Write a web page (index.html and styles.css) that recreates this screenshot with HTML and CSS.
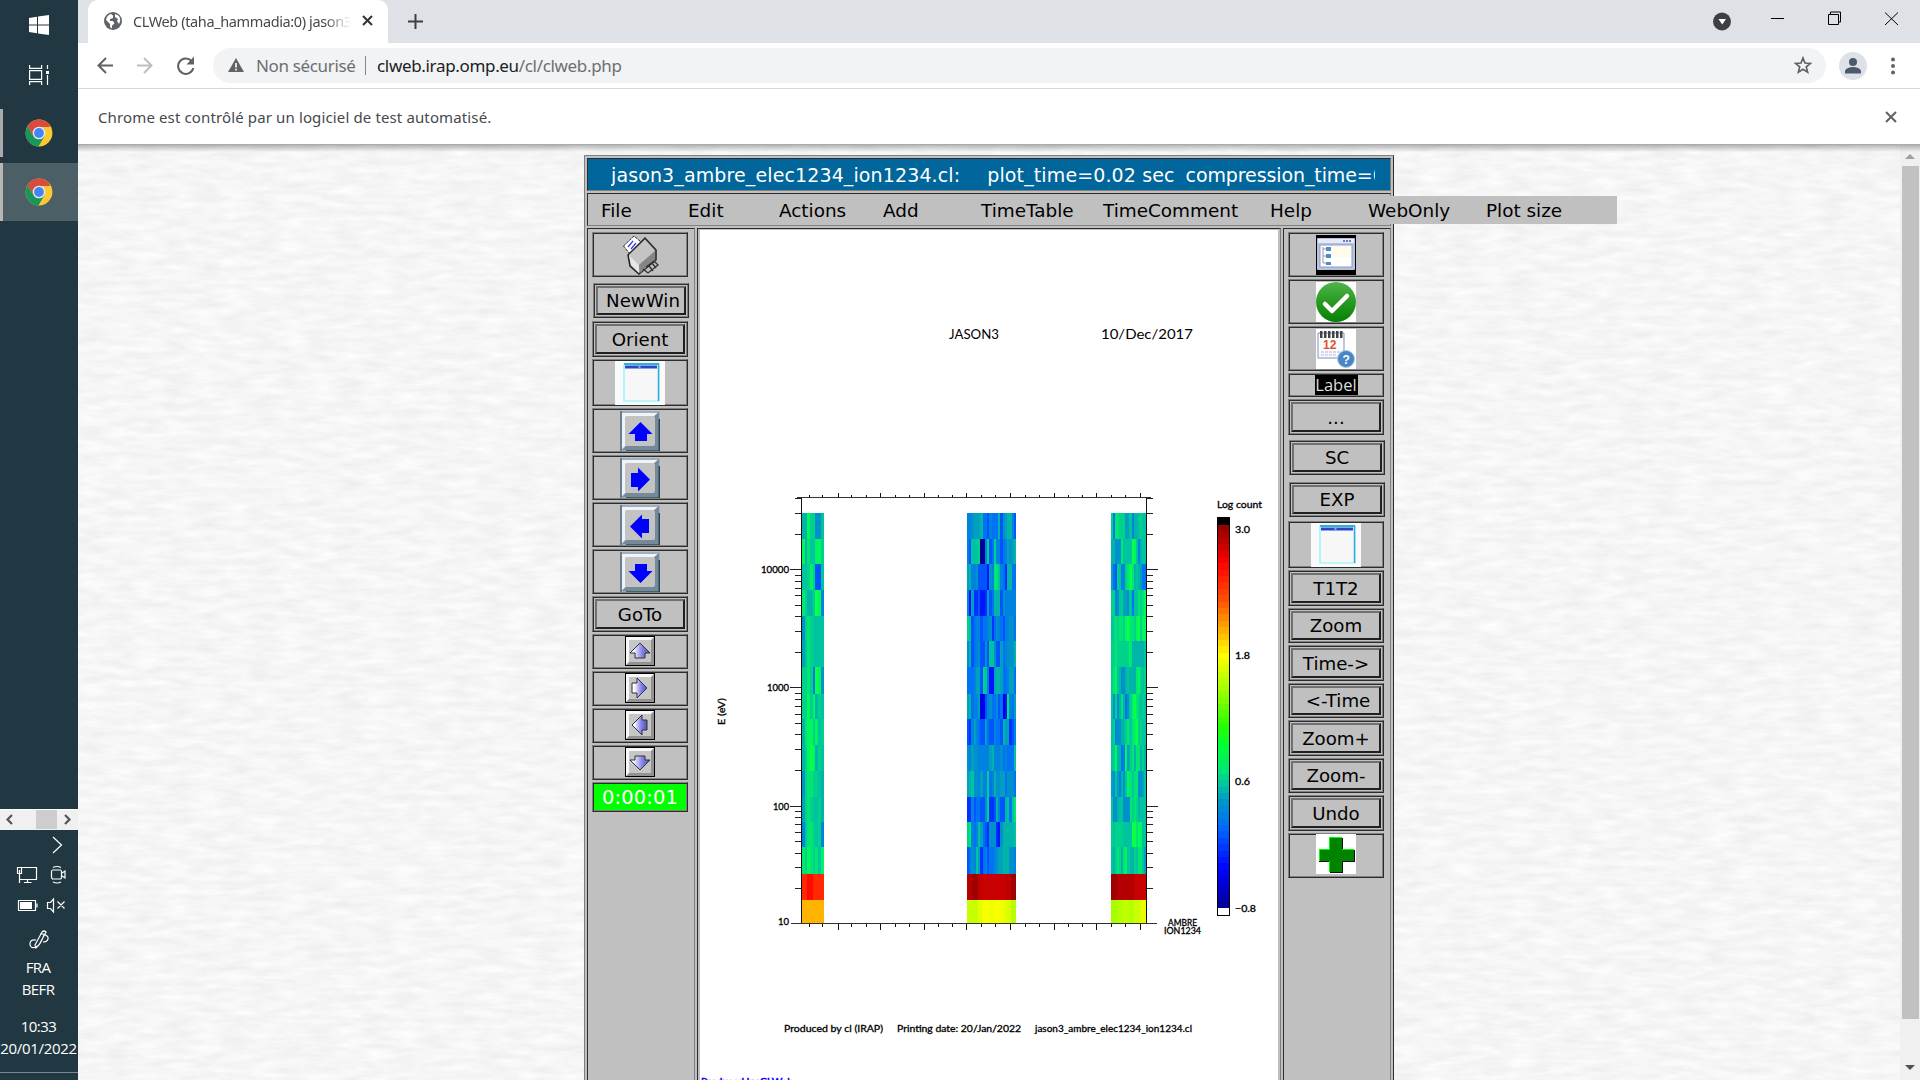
FILE: index.html
```html
<!DOCTYPE html>
<html lang="fr">
<head>
<meta charset="utf-8">
<title>CLWeb</title>
<link rel="stylesheet" href="styles.css">
</head>
<body>
<svg class="defs" width="0" height="0">
  <defs>
    <symbol id="chrome" viewBox="0 0 48 48">
      <circle cx="24" cy="24" r="23" fill="#fcc934"/>
      <path d="M24 1A23 23 0 0 0 4 12.6L14.5 30 24 13.500H43.500A23 23 0 0 0 24 1z" fill="#d94b3f"/>
      <path d="M4.200 12.300A23 23 0 0 0 23 47L33.500 29.500 24 34.500 14.200 29.200z" fill="#17975a"/>
      <circle cx="24" cy="24" r="10.800" fill="#e8eaed"/><circle cx="24" cy="24" r="8.400" fill="#4285f4"/>
    </symbol>
    <symbol id="window" viewBox="0 0 50 44">
      <path fill="#fafafa" d="M0 0h50v44H0z"/>
      <path d="M9 3h35v37H9z" fill="#f7f7f7" stroke="#82f5f7" stroke-width="1.200"/>
      <path d="M9 3h35" stroke="#28b4d8" stroke-width="2"/><path d="M43.500 3v37" stroke="#38a9d6" stroke-width="1.500"/>
      <path d="M10 6h32" stroke="#2848c8" stroke-width="3"/><path d="M23.500 6h2" stroke="#fff"/>
    </symbol>
    <symbol id="bevel" viewBox="0 0 40 40">
      <path fill="#a2b0bd" d="M0 0h40v40H0z"/><path d="M1 0v40" stroke="#54717c" stroke-width="1.500"/>
      <path d="M2 2h36l-5 5H7v26l-5 5z" fill="#f2f2fb"/><path d="M39 1v38H2l5-5h26V6z" fill="#75899a"/>
      <path d="M39.300 8v32H6" fill="none" stroke="#24484c" stroke-width="1.500"/><rect x="5" y="5" width="30" height="30" rx="2" fill="#c3c3c3"/>
    </symbol>
    <symbol id="smallbevel" viewBox="0 0 30 30">
      <path fill="#000" d="M0 0h30v30H0z"/><path fill="#f8f8f8" d="M1 1h28v28H1z"/><path fill="#929292" d="M29 1v28H1l3-3h22V4z"/><path fill="#c6c6c6" d="M4 4h22v22H4z"/>
    </symbol>
    <linearGradient id="lav"><stop offset=".15" stop-color="#fff"/><stop offset=".6" stop-color="#8585e8"/><stop offset="1" stop-color="#5050ae"/></linearGradient>
    <linearGradient id="green" x2="0" y2="1"><stop stop-color="#50b54c"/><stop offset=".5" stop-color="#279a21"/><stop offset="1" stop-color="#078006"/></linearGradient>
    <filter id="paper" x="0" y="0" width="100%" height="100%" color-interpolation-filters="sRGB">
      <feTurbulence type="fractalNoise" baseFrequency=".035 .14" numOctaves="4" seed="8"/>
      <feColorMatrix values=".08 0 0 0 .923 .08 0 0 0 .923 .08 0 0 0 .923 0 0 0 0 1"/>
    </filter>
  </defs>
</svg>

<div class="screen">
  <aside class="taskbar">
    <div class="task start"><svg width="20" height="20" viewBox="0 0 20 20" fill="#fff"><path d="M0 3l8-1.200v7.700H0zM9 1.600L20 0v9.500H9zM0 10.500h8v7.700L0 17zM9 10.500h11V20L9 18.400z"/></svg></div>
    <div class="task view"><svg width="20" height="20" viewBox="0 0 20 20" fill="none" stroke="#fff" stroke-width="1.200"><path d="M.6 0v3.400h12V0M.6 20v-3.400h12V20M.6 5.600h12v8.800H.6zM18.500 0v4M18.500 10v10"/><path d="M17 6h3v3h-3z" fill="#fff" stroke="none"/></svg></div>
    <div class="task app"><svg width="28" height="28"><use href="#chrome"/></svg></div>
    <div class="task app current"><svg width="28" height="28"><use href="#chrome"/></svg></div>
    <div class="sidescroll"><svg width="78" height="20" fill="none" stroke="#555" stroke-width="2.200"><path stroke="none" fill="#cdcdcd" d="M36 0h21v19H36z"/><path d="M12 5L7.500 9.500 12 14M65 5L69.500 9.500 65 14"/></svg></div>
    <svg class="tray" width="78" height="130" fill="none" stroke="#fff" stroke-width="1.200">
      <path d="M53 7l8.500 8-8.500 8"/>
      <path d="M22 37.500h14.500v12H19.500v-5M27.500 49.500V52M24 52.500h7.500M17.500 37.500h4v6h-4zM19.500 40v13"/>
      <path d="M52.500 40h8q1 0 1 2v5q0 2-1 2h-8q-1-1-1-2v-5q0-2 1-2zM62 43l3-2v7l-3-2M53 37.500q4-2 8 0M53 52q4 2 8 0"/>
      <path d="M18.500 70.500h17v10h-17zM37 73.500v4"/><path d="M20 72h12v7H20z" fill="#fff" stroke="none"/>
      <path d="M47.500 72.500h3l3-3.500v13l-3-3.500h-3zM57.500 71.500l7 7M64.500 71.500l-7 7"/>
      <path d="M36 118l-1-3 7-13q2-2 4 0l-7 13zM43 104q6 2 5 5t-5 3M36 110q-6-1-6 4t6 3q4-1 8-12M40 104h4"/>
    </svg>
    <div class="lang">FRA<br>BEFR</div>
    <div class="clock">10:33<br><span>20/01/2022</span></div>
    <div class="desk"></div>
  </aside>

  <main class="browser">
    <header class="tabs">
      <div class="tab">
        <svg width="18" height="18" viewBox="0 0 18 18"><circle cx="9" cy="9" r="9" fill="#5f6368"/><path d="M2 8l4 4v3l2 1.500v-3l2.500-2L9 9H6V7l3-1V3.500L7 2Q3 3 2 8zM11 2v3l3 2-1 2 2 3q2-3 1-6t-5-4z" fill="#fff"/></svg>
        <span>CLWeb (taha_hammadia:0) jason3</span>
        <svg width="11" height="11" stroke="#333" stroke-width="2"><path d="M1 1l9 9M10 1l-9 9"/></svg>
      </div>
      <svg class="plus" width="15" height="15" stroke="#3c4043" stroke-width="2"><path d="M7.500 0v15M0 7.500h15"/></svg>
      <svg class="wincontrols" width="190" height="32" viewBox="0 0 190 32" fill="none" stroke="#000"><circle cx="12" cy="21.500" r="9" fill="#3c4043" stroke="none"/><path d="M8.500 19h7.500L12.200 24.500z" fill="#fff" stroke="none"/><path d="M61 18.500h13M118.500 14.500h10v10h-10zM120.500 14v-2h10v10H129M175 12.500l13 12.500M188 12.500L175 25"/></svg>
    </header>
    <div class="toolbar">
      <svg width="105" height="20" viewBox="0 0 105 20" fill="none" stroke="#5f6368" stroke-width="2"><path d="M17 9.500H3M10 2L2.500 9.500 10 17"/><path d="M41 9.500h14M48 2l7.500 7.500L48 17" stroke="#bcbec0"/><path d="M95.500 5a7.700 7.700 0 1 0 1.800 7"/><path d="M98 .5v8H90.500z" fill="#5f6368" stroke="none"/></svg>
      <div class="omnibox">
        <svg width="16" height="14" viewBox="0 0 16 14"><path d="M8 0l8 14H0z" fill="#5f6368"/><path d="M7.200 5h1.600v4.500H7.200zM7.200 10.800h1.600v1.600H7.200z" fill="#fff"/></svg>
        <span class="unsafe">Non sécurisé</span><i></i><span class="url"><b>clweb.irap.omp.eu</b>/cl/clweb.php</span>
        <svg class="star" width="18" height="18" viewBox="0 0 18 18" fill="none" stroke="#5f6368" stroke-width="1.700"><path d="M9 2l2 5 5.500.4-4.200 3.500 1.300 5.200L9 13.200l-4.600 2.900 1.300-5.200L1.500 7.400 7 7z"/></svg>
      </div>
      <svg width="60" height="28" viewBox="0 0 60 28"><circle cx="14" cy="14" r="14" fill="#dee1e6"/><g fill="#4c5a6c"><circle cx="14" cy="10" r="4"/><path d="M6 21.500v-3q2-3.500 8-3.500t8 3.500v3z"/></g><g fill="#5f6368"><circle cx="54" cy="7.500" r="2"/><circle cx="54" cy="14" r="2"/><circle cx="54" cy="20.500" r="2"/></g></svg>
    </div>
    <div class="infobar"><span>Chrome est contrôlé par un logiciel de test automatisé.</span><svg width="12" height="12" stroke="#5f6368" stroke-width="2"><path d="M1 1l10 10M11 1L1 11"/></svg></div>

    <div class="page">
      <svg class="paper" width="1822" height="935"><rect width="1822" height="935" filter="url(#paper)"/></svg>
      <section class="app">
        <div class="cell title"><div>jason3_ambre_elec1234_ion1234.cl:<span class="t2">plot_time=0.02 sec</span><span class="t3">compression_time=0</span></div></div>
        <div class="cell menu"><nav><span>File</span><span>Edit</span><span>Actions</span><span>Add</span><span>TimeTable</span><span>TimeComment</span><span>Help</span><span>WebOnly</span><span>Plot size</span></nav></div>
        <div class="body">
          <div class="cell tools left">
            <div class="b h45"><svg width="38" height="40" viewBox="0 0 38 40"><path d="M2.500 11L13 1l7 6-11 12z" fill="#fff" stroke="#222" stroke-dasharray="3 1"/><path d="M7 12l5-6M10 14l5-6" stroke="#3c3cdc" stroke-width="1.300"/><path d="M7 20L24 3l11 12v10L18 39l-9-8z" fill="#aaa" stroke="#222" stroke-width="1.500"/><path d="M8 20L24 5l10 11-16 14z" fill="#c4c4c4"/><path d="M8 20l10 10v8l-8-8z" fill="#e6e6e6"/><path d="M18 30l16-14v9L19 38z" fill="#858585"/><path d="M25 32l8-6 4 4-10 8-5-4M28 31l4 5M31 28l4 5" fill="none" stroke="#333" stroke-width="1.300"/></svg></div>
            <div class="b btn h35 shift mt6"><span class="nudge">NewWin</span></div>
            <div class="b btn h36 mt3"><span>Orient</span></div>
            <div class="b h47"><svg width="50" height="44"><use href="#window"/></svg></div>
            <div class="b h45"><svg width="40" height="40"><use href="#bevel"/><path fill="#00f" d="M20.500 11l12 12H27v7H15v-7H8.500z"/></svg></div>
            <div class="b h45"><svg width="40" height="40"><use href="#bevel"/><path fill="#00f" d="M30 21.500L18 33.500V29h-7V15h7V9.500z"/></svg></div>
            <div class="b h45"><svg width="40" height="40"><use href="#bevel"/><path fill="#00f" d="M10 21.500L22 33.500V28h7V14h-7V9.500z"/></svg></div>
            <div class="b h45"><svg width="40" height="40"><use href="#bevel"/><path fill="#00f" d="M20.500 31l12-12H27v-7H15v7H8.500z"/></svg></div>
            <div class="b btn h36"><span>GoTo</span></div>
            <div class="b h35 up1"><svg width="30" height="30"><use href="#smallbevel"/><path d="M15 7l10 10h-5v5H10v-5H5z" fill="url(#lav)" stroke="#333"/></svg></div>
            <div class="b h35 up1"><svg width="30" height="30"><use href="#smallbevel"/><path d="M22 15L12 25v-5H7V10h5V5z" fill="url(#lav)" stroke="#333"/></svg></div>
            <div class="b h35 up1"><svg width="30" height="30"><use href="#smallbevel"/><path d="M7 15l10 10v-5h5V10h-5V5z" fill="url(#lav)" stroke="#333"/></svg></div>
            <div class="b h35 up1"><svg width="30" height="30"><use href="#smallbevel"/><path d="M15 23L5 13h5V9h10v4h5z" fill="url(#lav)" stroke="#333"/></svg></div>
            <div class="b timer">0:00:01</div>
          </div>
          <div class="cell canvas"><svg id="plot" width="578" height="850" viewBox="700 230 578 850"></svg></div>
          <div class="cell tools right">
            <div class="b h45"><svg width="40" height="40" viewBox="0 0 40 40"><path d="M0 0h40v40H0z"/><rect x="1" y="3" width="38" height="32" rx="1" fill="#b9c1dc"/><path fill="#e3ebfb" d="M2 4h36v4H2z"/><path d="M27 6h8" stroke="#6879bd" stroke-width="2" stroke-dasharray="2 1"/><path fill="#fff" stroke="#8d9bcc" d="M4 10h32v22H4z"/><path fill="#fffbea" d="M16 11h19v11H16z"/><path d="M7 12v16h4M7 14h4M7 21h4" fill="none" stroke="#999"/><path fill="#4e8cce" d="M10 12h5v4h-5zM10 19h5v4h-5zM10 27h5v3h-5z"/></svg></div>
            <div class="b h45"><svg width="40" height="40"><path fill="#fff" d="M0 0h40v40H0z"/><circle cx="20" cy="20" r="20" fill="url(#green)"/><path d="M9 22l7 7 15-15" fill="none" stroke="#fff" stroke-width="4.500" stroke-linecap="round" stroke-linejoin="round"/></svg></div>
            <div class="b h45"><svg width="40" height="40"><path fill="#fff" d="M0 0h40v40H0z"/><path d="M2 4h26v25H2z" fill="#fafbff" stroke="#8290b5"/><path d="M4 5.500h23" stroke="#444" stroke-width="7" stroke-dasharray="2.500 1.500"/><text x="7" y="20" class="cal">12</text><path d="M5 23h20M5 26h15" stroke="#a9bad6" stroke-dasharray="3 1"/><circle cx="30" cy="30" r="8.500" fill="#4a86c5" stroke="#a9cbea"/><text x="26.500" y="34.500" class="q">?</text></svg></div>
            <div class="b h24"><span class="label">Label</span></div>
            <div class="b btn h36"><span>...</span></div>
            <div class="b btn h35 shift mt5"><span>SC</span></div>
            <div class="b btn h35 shift mt7"><span>EXP</span></div>
            <div class="b h47 mt4"><svg width="50" height="44"><use href="#window"/></svg></div>
            <div class="b btn h36"><span>T1T2</span></div>
            <div class="b btn h35"><span>Zoom</span></div>
            <div class="b btn h36"><span>Time-&gt;</span></div>
            <div class="b btn h35"><span class="nudge">&lt;-Time</span></div>
            <div class="b btn h36"><span>Zoom+</span></div>
            <div class="b btn h35"><span>Zoom-</span></div>
            <div class="b btn h36"><span>Undo</span></div>
            <div class="b h45 up2"><svg width="40" height="40"><path fill="#fff" d="M0 0h40v40H0z"/><path d="M14 4h13v12h12v12H27v11H14V28H3V16h11z" fill="#111"/><path d="M13 3h13v12h12v12H26v11H13V27H3V15h10z" fill="#0f0"/><path d="M14 4h12v12h12v11H26v11H14V27H4V16h10z" fill="#008400"/></svg></div>
          </div>
        </div>
      </section>
      <div class="scrollbar"><i class="up"></i><div></div><i class="down"></i></div>
    </div>
  </main>
</div>
<script src="plot.js"></script>
</body>
</html>
```
FILE: styles.css
```css
*{box-sizing:border-box}
body{margin:0;overflow:hidden;font-family:"Noto Sans",sans-serif}
svg{display:block;flex:none}
.defs{position:absolute}
.screen{width:1920px;height:1080px;display:flex}
.taskbar{width:78px;background:#213842;color:#fff;display:flex;flex-direction:column;align-items:center;font-family:"Open Sans",sans-serif;font-size:15px;line-height:22px;text-align:center}
.task{width:78px;display:flex;align-items:center;justify-content:center;flex:none}
.start{height:50px}
.view{height:49px;margin-bottom:10px}
.app.task{height:48px;border-left:3px solid #aaa;padding-right:3px}
.app.task.current{height:58px;margin-top:6px;background:#4c5e66;border-left-color:#b8b5b3}
.sidescroll{width:78px;height:21px;margin-top:588px;background:#f0f0f0;border-top:1px solid #fff}
.lang{margin-top:-4px;height:44px;letter-spacing:-.6px;padding-right:2px}
.clock{margin-top:15px;height:44px;letter-spacing:-.5px;padding-right:1px}
.clock span{letter-spacing:-.3px;white-space:nowrap}
.desk{width:78px;height:1px;background:#78878d;margin-top:13px}
.browser{width:1842px;display:flex;flex-direction:column;background:#fff}
.tabs{height:43px;background:#dee1e6;display:flex;padding-left:10px}
.tab{width:300px;height:43px;background:#fff;border-radius:10px 10px 0 0;display:flex;align-items:center;padding:0 0 2px 16px;font-size:14.500px;color:#45494d}
.tab span{width:218px;margin:0 11px;overflow:hidden;white-space:nowrap;letter-spacing:-.38px;-webkit-mask-image:linear-gradient(90deg,#000 88%,transparent)}
.plus{margin:14px 0 0 20px}
.wincontrols{margin-left:auto;margin-right:20px}
.toolbar{height:46px;border-bottom:1px solid #d5d7da;display:flex;align-items:center;padding-left:18px}
.omnibox{width:1613px;height:35px;margin:0 13px 0 12px;border-radius:18px;background:#f1f3f4;display:flex;align-items:center;padding:0 14px 1px 15px;font-size:17px;color:#6b6f73}
.omnibox i{width:1px;height:19px;background:#888;margin:0 11px 0 9px}
.unsafe{margin-left:12px;width:100px;white-space:nowrap;letter-spacing:-.35px}
.url{letter-spacing:-.33px}
.url b{font-weight:400;color:#202124}
.star{margin-left:auto}
.infobar{height:56px;border-bottom:1px solid #a9abad;display:flex;align-items:center;justify-content:space-between;padding:0 23px 0 20px;font-size:15px;letter-spacing:.13px;color:#45494d}
.page{height:935px;position:relative;display:flex;overflow:hidden;background:#f4f4f4}
.paper{position:absolute;left:0;top:0}
.page::after{content:"";position:absolute;left:0;right:0;top:0;height:7px;background:linear-gradient(#0004,#0000)}
.app:not(.task){position:relative;width:810px;height:960px;margin:10px 0 0 506px;padding:2px;border:1px solid;border-color:#808080 #2c2c2c #2c2c2c #808080;background:#c0c0c0;font:18.200px "DejaVu Sans",Verdana,sans-serif;color:#000}
.cell{border:1px solid;border-color:#2c2c2c #808080 #808080 #2c2c2c;background:#c0c0c0}
.title{height:33px;background:#00669b;color:#fff;padding:0 15px 0 23px}
.title div{overflow:hidden;white-space:nowrap;line-height:32px;font-size:19px;letter-spacing:.12px}
.t2{margin-left:27px}.t3{margin-left:11px;letter-spacing:-.1px}
.menu{height:33px;margin-top:2px;display:flex;align-items:center}
.menu nav{width:1029px;height:28px;flex:none;display:flex;background:#c0c0c0;padding-left:13px;line-height:30px;font-size:18.400px}
.menu span{white-space:nowrap;flex:none;width:98px}
.menu span:nth-child(1){width:87px}.menu span:nth-child(2){width:91px}.menu span:nth-child(3){width:104px}.menu span:nth-child(5){width:122px}.menu span:nth-child(6){width:167px}.menu span:nth-child(8){width:118px}
.body{display:flex;gap:2px;margin-top:2px;height:870px}
.tools{width:108px;padding:3px 4px;display:flex;flex-direction:column;gap:2px}
.right{padding-left:4px}
.canvas{width:584px;padding:1px 2px}
#plot{background:#fff}
.b{width:96px;flex:none;border:1px solid;border-color:#808080 #2c2c2c #2c2c2c #808080;box-shadow:inset 1px 1px #2c2c2c,inset -1px -1px #808080;display:flex;align-items:center;justify-content:center}
.btn{padding:2px}
.btn span{width:100%;height:100%;border:2px solid;border-color:#707070 #202020 #202020 #707070;display:flex;align-items:center;justify-content:center;white-space:nowrap}
.shift{margin-left:1px}
.h24{height:24px}.h35{height:35px}.h36{height:36px}.h45{height:45px}.h47{height:47px}
.mt3{margin-top:1px}.mt4{margin-top:2px}.mt5{margin-top:3px}.mt6{margin-top:4px}.mt7{margin-top:5px}
.up1{padding-bottom:1px}.up2{padding-bottom:3px}
.btn .nudge{padding-left:4px}
.timer{height:30px;background:#0f0;color:#fff;font-size:19.500px;letter-spacing:.1px;padding-top:1px}
.label{background:#000;color:#ddd;width:43px;height:20px;font:16.500px/20px "Open Sans",sans-serif;text-align:center}
.cal{font:bold 12px "Liberation Sans",sans-serif;fill:#df532a}
.q{font:bold 12px "Liberation Sans",sans-serif;fill:#fff}
.scrollbar{position:relative;width:20px;margin-left:auto;background:#f0f0f0;display:flex;flex-direction:column;align-items:center;padding-top:9px}
.scrollbar div{width:17px;height:853px;margin-top:7px;background:#c1c1c1}
.scrollbar i{border:5px solid transparent;border-top:0;border-bottom:5px solid #a0a0a0}
.scrollbar .down{margin-top:46px;border-bottom:0;border-top:5px solid #505050}
#plot text{font-family:Lato,sans-serif;fill:#000}
```
FILE: plot.js
```js
const plot = document.getElementById('plot');
const parts = [];
const rect = (x, y, w, h, c) => parts.push(`<rect x="${x}" y="${y}" width="${w}" height="${h}" fill="${c}" shape-rendering="crispEdges"/>`);
const text = (x, y, len, size, s, extra = '') => parts.push(`<text x="${x}" y="${y}" textLength="${len}" lengthAdjust="spacingAndGlyphs" font-size="${size}" ${extra}>${s}</text>`);

const palette = {
  A: '#000096', B: '#0000e6', C: '#0014ff', D: '#0032ff', E: '#0055ff', F: '#0073f5', G: '#0082e1',
  H: '#0091cd', I: '#00a0be', J: '#00b4aa', K: '#00c3a0', L: '#00d28c', M: '#00e673', N: '#00f55f', O: '#0aff46'
};
const edges = [513, 539, 564, 590, 616, 641, 667, 694, 719, 745, 771, 797, 822, 847, 874];
const left = ['JJNLLHHK', 'NJMKKNNL', 'KKLNLEEK', 'MLJJLONG', 'HLMLKKKK', 'IKMLKKKK', 'LLMLFONH', 'LLNLNJLK', 'JMNNLNKL', 'JLNONJLK', 'HLMMLLKJ', 'ILMLKKLJ', 'GKMMLKLG', 'MLNMLMKN'];
const middle = [
  'GGHIIIJFFEGFFFJEHIJJGE', 'GEKKKLAAGLEFLGGEFGIHIJ', 'IJGGHEEEECHGMMKGFDJJFF', 'GCIDDECCDIEFJJJEHGGGGG',
  'LKEFGGEFFGHDFHGFEGGHHF', 'HJEFGHEEHEKKHEEIFGHHHJ', 'FFFGIIELKGCCIJJIFFGIIF', 'IJFGGIBBEGHFFHEFBCMGFI',
  'EDGIGFEEIFEEGFFEJIIDEG', 'HGIHHGGGGGIJGGGHFGFFFK', 'IJKHHGIGGLFGJHHIIFHHHF', 'DDGEFFEEHLDDEJGEEJKFKM',
  'LMGFGKIFEDHHHDCHJJJJJK', 'EFHGKIDFGEFFGHIIJJJHHG'
];
const right = [
  'LFMMLLLIIKKGJJKLKK', 'JJHHHMKKKKKONKGJKK', 'IFELKGGLMNOMJKJIFF', 'LLGHKLIIHKKFKKMLMN', 'KLMLMMLNONMMLNOLNN', 'LLMLLLLLLNMJJJJJJK',
  'LMNKJHHJKJJJJMNLKL', 'KHLHJMJFHKLNOMLKLK', 'KLGHHJJLMLKMNOLLKK', 'KLNJJFGNIJLMJMMJLJ', 'IHKIGJHKNMMKMMHHIK', 'KHHJKKHHHHMLMLJKKK',
  'LKLLLLKKKKKOOMNNKK', 'KJLMLJMNKLJJLKMMKI'
];
const field = (x, width, rows) => rows.forEach((row, r) => {
  const w = width / row.length;
  [...row].forEach((c, i) => rect((x + i * w).toFixed(2), edges[r], (w + .1).toFixed(2), edges[r + 1] - edges[r], palette[c]));
});
field(802, 21.5, left);
field(967, 49, middle);
field(1111, 35, right);
const strip = (x, width, y, h, cols) => cols.forEach((c, i) => rect(x + i * width / cols.length, y, width / cols.length + .2, h, c));
strip(802, 21.3, 874, 26, ['#ff2800', '#ff0a00', '#ff2800', '#ff2800']);
strip(802, 21.3, 900, 24, ['#ffb400']);
strip(967, 49, 874, 26, ['#b40000', '#a00000', '#c30000', '#c80000', '#c80000', '#c80000', '#c80000', '#be0000', '#a00000']);
strip(967, 49, 900, 24, ['#c8ff00', '#c8ff00', '#e6ff00', '#faff00', '#f0ff00', '#faff00', '#f0ff00', '#dcff00', '#b4ff00']);
strip(1111, 35, 874, 26, ['#a00000', '#b40000', '#b40000', '#b40000', '#c80000', '#c80000']);
strip(1111, 35, 900, 24, ['#a5ff00', '#b4ff00', '#bfff00', '#b4ff00', '#ccff00', '#e6ff00']);

rect(801, 498, 1, 426, '#111');
rect(1146, 498, 1, 426, '#111');
rect(797, 497, 354, 1, '#333');
rect(791, 923, 366, 1, '#333');
[88, 128, 174, 215, 260, 302, 346, 388, 432, 474, 518, 560, 604, 646, 691, 736, 777, 822, 864, 908, 949, 994, 1035, 1080].forEach((t, i) => {
  const x = Math.round(780 + t / 3 - .5), major = i % 3 === 2;
  rect(x, major ? 493 : 495, 1, major ? 4 : 2, '#111');
  rect(x, 924, 1, major ? 6 : 3, '#111');
});
for (let d = 0; d < 4; d++) for (let n = 1; n < 10; n++) {
  const y = Math.round(923.8 - 118.2 * (d + Math.log10(n)));
  if (y < 497) continue;
  if (d === 0 && n === 1) continue;
  const len = n === 1 ? 11 : 6;
  rect(801 - len, y, len, 1, '#222');
  rect(1147, y, len, 1, '#222');
}

const bold = 'stroke="#000" stroke-width=".3"';
text(949, 338.500, 50, 13.5, 'JASON3');
text(1101, 338.500, 92, 13.5, '10/Dec/2017');
text(761, 572.5, 28, 9, '10000', bold);
text(767, 691, 22, 9, '1000', bold);
text(773, 810, 16, 9, '100', bold);
text(778, 925, 11, 9, '10', bold);
text(0, 0, 27, 9.5, 'E (eV)', `transform="translate(725 725) rotate(-90)" ${bold}`);
text(1217, 508, 45, 9.500, 'Log count', bold);
text(1235, 532.500, 15, 9, '3.0', bold);
text(1235, 658.500, 15, 9, '1.8', bold);
text(1235, 784.500, 15, 9, '0.6', bold);
text(1235, 911.500, 21, 9, '−0.8', bold);
text(1168, 925.500, 29, 8.500, 'AMBRE', bold);
text(1164, 933.500, 37, 8.500, 'ION1234', bold);
text(784, 1032, 99, 9.500, 'Produced by cl (IRAP)', bold);
text(897, 1032, 124, 9.500, 'Printing date: 20/Jan/2022', bold);
text(1035, 1032, 157, 9.500, 'jason3_ambre_elec1234_ion1234.cl', bold);
parts.push('<text x="701" y="1084.500" textLength="92" lengthAdjust="spacingAndGlyphs" font-size="9.500" style="fill:#00f" stroke="#00f" stroke-width=".5">Produced by CLWeb</text>');

const stops = [[525, 145, 0, 0], [545, 200, 0, 0], [562, 255, 0, 0], [600, 255, 80, 0], [625, 255, 160, 0], [655, 255, 255, 0], [690, 160, 255, 0], [725, 40, 255, 0], [745, 0, 255, 48], [770, 0, 230, 120], [785, 0, 195, 160], [802, 0, 150, 200], [830, 0, 100, 255], [865, 0, 10, 255], [882, 0, 0, 225], [908, 0, 0, 145]];
rect(1217, 517, 13, 399, '#000');
for (let i = 0; i < 60; i++) {
  const y = 525 + i * 383 / 60;
  const k = Math.max(1, stops.findIndex(s => s[0] > y + 3 || s[0] === 908));
  const a = stops[k - 1], b = stops[k], f = Math.min(1, (y + 3 - a[0]) / (b[0] - a[0]));
  rect(1218, y.toFixed(2), 11, 6.6, `rgb(${[1, 2, 3].map(j => Math.round(a[j] + (b[j] - a[j]) * f))})`);
}
rect(1218, 908, 11, 7, '#fff');
plot.innerHTML = parts.join('');
```
